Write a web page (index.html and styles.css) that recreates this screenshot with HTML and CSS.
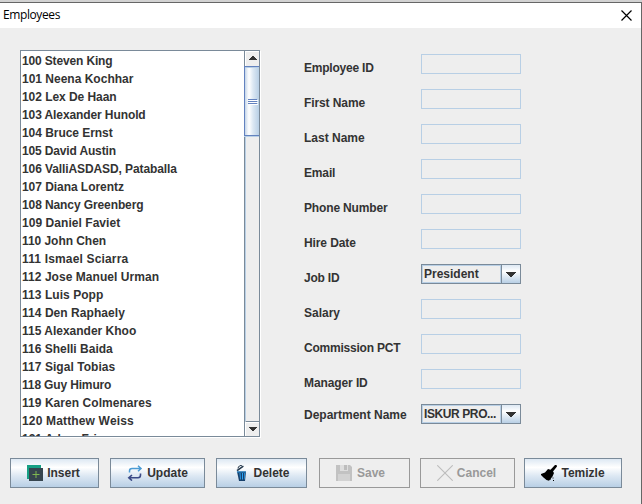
FILE: index.html
```
<!DOCTYPE html>
<html lang="en">
<head>
<meta charset="utf-8">
<title>Employees</title>
<link rel="stylesheet" href="styles.css">
</head>
<body>
<div class="window">
  <header class="titlebar">
    <span class="title">Employees</span>
    <svg class="close" width="11" height="11" viewBox="0 0 11 11"><path d="M.5 .5l10 10M10.500 .5l-10 10" stroke="#000" stroke-width="1.200"/></svg>
  </header>
  <main class="content">
    <section class="list-pane">
      <ul class="list">
        <li class="n3">100 Steven King</li><li>101 Neena Kochhar</li><li class="n1">102 Lex De Haan</li><li class="n2">103 Alexander Hunold</li><li class="n1">104 Bruce Ernst</li><li class="n3">105 David Austin</li><li class="n2">106 ValliASDASD, Pataballa</li><li class="n1">107 Diana Lorentz</li><li class="n2">108 Nancy Greenberg</li><li class="p1">109 Daniel Faviet</li><li class="n1">110 John Chen</li><li class="p3">111 Ismael Sciarra</li><li class="p1">112 Jose Manuel Urman</li><li class="p1">113 Luis Popp</li><li class="p1">114 Den Raphaely</li><li>115 Alexander Khoo</li><li>116 Shelli Baida</li><li class="p1">117 Sigal Tobias</li><li class="n3">118 Guy Himuro</li><li class="p1">119 Karen Colmenares</li><li class="p3">120 Matthew Weiss</li><li>121 Adam Fripp</li>
      </ul>
      <div class="scrollbar">
        <div class="arrow up"><svg width="8" height="4" viewBox="0 0 8 4" shape-rendering="crispEdges"><path d="M3 0h2v1h1v1h1v1h1v1H0V3h1V2h1V1h1z" fill="#333"/></svg></div>
        <div class="thumb"><i></i><i></i><i></i></div>
        <div class="track"></div>
        <div class="arrow down"><svg width="8" height="4" viewBox="0 0 8 4" shape-rendering="crispEdges"><path d="M0 0h8v1H7v1H6v1H5v1H3V3H2V2H1V1H0z" fill="#333"/></svg></div>
      </div>
    </section>
    <section class="form">
      <div class="row"><label class="n4">Employee ID</label><div class="field"></div></div>
      <div class="row"><label class="n2">First Name</label><div class="field"></div></div>
      <div class="row"><label>Last Name</label><div class="field"></div></div>
      <div class="row"><label class="n3">Email</label><div class="field"></div></div>
      <div class="row"><label class="n3">Phone Number</label><div class="field"></div></div>
      <div class="row"><label class="n2">Hire Date</label><div class="field"></div></div>
      <div class="row"><label class="n4">Job ID</label><div class="combo"><span>President</span><b><svg width="10" height="5" viewBox="0 0 10 5" shape-rendering="crispEdges"><path d="M0 0h10v1H9v1H8v1H7v1H6v1H4V4H3V3H2V2H1V1H0z" fill="#333"/></svg></b></div></div>
      <div class="row"><label>Salary</label><div class="field"></div></div>
      <div class="row"><label class="n4">Commission PCT</label><div class="field"></div></div>
      <div class="row"><label class="n2">Manager ID</label><div class="field"></div></div>
      <div class="row last"><label>Department Name</label><div class="combo"><span class="n5">ISKUR PRO...</span><b><svg width="10" height="5" viewBox="0 0 10 5" shape-rendering="crispEdges"><path d="M0 0h10v1H9v1H8v1H7v1H6v1H4V4H3V3H2V2H1V1H0z" fill="#333"/></svg></b></div></div>
    </section>
  </main>
  <footer class="buttons">
    <div class="btn insert"><svg width="16" height="16" viewBox="0 0 16 16"><path d="M0 0h14v14H0z" fill="#16a085"/><path d="M2 3h14v13H2z" fill="#36454f"/><path d="M9 6v7M5.500 9.500h7" stroke="#7fb850" stroke-width="1"/></svg><span>Insert</span></div>
    <div class="btn update"><svg width="16" height="16" viewBox="0 0 16 16" fill="none"><path d="M2.500 7.500V6Q2.500 3.500 5 3.500h8M11 .8l3 2.700-3 2.700" stroke="#4a9bd4" stroke-width="1.500"/><path d="M13.500 8.500V10q0 2.800-2.500 2.800H2.500M5 10l-3.200 2.800L5 15.600" stroke="#3b4a86" stroke-width="1.600"/></svg><span>Update</span></div>
    <div class="btn delete"><svg width="16" height="16" viewBox="0 0 16 16"><path d="M4 6.500h9L12 16H6z" fill="#17406b"/><path d="M6.500 8h1l.4 6.500h-.8zM9 8h1v6.500H9zM11.300 8h.8l-.6 6.500h-.6z" fill="#2aa3f5"/><path d="M3.800 6.500h9.200v1H4z" fill="#238bd6"/><path d="M3.500 5L10 .5l.8 1.300L4.500 6.200z" fill="#24394d"/><path d="M5 3.500L5.500 1.700 8 .3l1 .8" fill="none" stroke="#24394d"/></svg><span>Delete</span></div>
    <div class="btn save off"><svg width="16" height="16" viewBox="0 0 16 16"><path d="M0 0h14l2 2v14H0z" fill="#c2c2c2"/><path d="M4 0h8v6H4z" fill="#dedede"/><path d="M8 0h3v5H8z" fill="#bdbdbd"/><path d="M2 9h12v7H2z" fill="#d2d2d2"/></svg><span>Save</span></div>
    <div class="btn cancel off"><svg width="16" height="16" viewBox="0 0 16 16"><path d="M.3 .3l15.400 15.400M15.700 .3L.3 15.700" stroke="#bcbcbc" stroke-width="1.100"/></svg><span>Cancel</span></div>
    <div class="btn temizle"><svg width="16" height="16" viewBox="0 0 16 16"><path d="M14 0h1.500l.5 1.500L12 6.500 13 8l-1.500 3.500L8 15.800 5.500 15 2.500 12.500 0 10V9l4-1.500L7 4l2.500.8z"/><path d="M8.500 13.500h1.500v1H8.500zM11.500 12.500h1v1h-1zM12 15h1v1h-1z"/></svg><span>Temizle</span></div>
  </footer>
</div>
</body>
</html>
```
FILE: styles.css
```
* { box-sizing: border-box; }
body { margin: 0; background: #eee; font: bold 12px/18px "Liberation Sans", sans-serif; color: #333; }
.window { width: 642px; height: 504px; border-top: 2px solid #d2d2d2; overflow: hidden; display: flex; flex-direction: column; }
.titlebar { flex: none; height: 26px; border-top: 1px solid #666; border-right: 1px solid #666; background: #fff; display: flex; justify-content: space-between; padding: 3px 9px 0 3px; }
.title { font: 12px/18px "Open Sans", "Noto Sans", sans-serif; color: #000; letter-spacing: -.4px; }
.close { margin-top: 4px; }
.content { flex: none; height: 430px; padding: 22px 0 0 20px; border-right: 1px solid #666; display: flex; align-items: flex-start; }
.list-pane { width: 240px; height: 387px; border: 1px solid #7a8a99; box-shadow: 1px 1px #fff; background: #fff; display: flex; overflow: hidden; }
.list { list-style: none; margin: 0; padding: 1px 0 0 1px; width: 223px; height: 385px; overflow: hidden; white-space: nowrap; }
.list li { height: 18px; }
.n1 { letter-spacing: -.05px; }
.n2 { letter-spacing: -.1px; }
.n3 { letter-spacing: -.15px; }
.n4 { letter-spacing: -.22px; }
.n5 { letter-spacing: -.4px; }
.p1 { letter-spacing: .05px; }
.p3 { letter-spacing: .16px; }
.scrollbar { width: 15px; height: 385px; border-left: 1px solid #7a8a99; background: #eee; display: flex; flex-direction: column; }
.arrow { height: 15px; flex: none; border-top: 1px solid #fff; border-left: 1px solid #fff; display: flex; align-items: center; justify-content: center; }
.up { padding-bottom: 2px; }
.down { border-top: 1px solid #7a8a99; box-shadow: inset 0 1px #fff; }
.thumb { height: 70px; flex: none; margin-left: -1px; border: 1px solid #6382bf; border-right: 0; background: linear-gradient(90deg, #c3d4e8 0, #e6edf5 2px, #fff 4px, #dce8f3 8px, #b8cfe5); box-shadow: inset 0 1px #b8cfe5, 0 1px #b8cfe5; display: flex; flex-direction: column; align-items: center; justify-content: center; gap: 1px; }
.thumb i { width: 9px; height: 1px; background: #6382bf; box-shadow: 1px 1px #fff; }
.track { flex: 1; border-left: 1px solid #b8cfe5; }
.form { margin-left: 44px; padding-top: 4px; }
.row { height: 35px; display: flex; }
.row label { width: 117px; padding-top: 5px; white-space: nowrap; }
.row.last label { padding-top: 2px; }
.field { width: 100px; height: 20px; border: 1px solid #b8cfe5; }
.combo { width: 100px; height: 20px; border: 1px solid #7a8a99; display: flex; }
.combo span { width: 79px; border: 1px solid #b8cfe5; padding-left: 1px; line-height: 16px; white-space: nowrap; }
.combo b { width: 19px; border-left: 1px solid #7a8a99; background: linear-gradient(#dde8f3, #fff 35%, #b8cfe5); display: flex; align-items: center; justify-content: center; }
.buttons { flex: none; height: 46px; padding-left: 10px; border-right: 1px solid #666; display: flex; }
.btn { height: 30px; border: 1px solid #7a8a99; background: linear-gradient(#dde8f3, #fff 30%, #dde8f3 60%, #b8cfe5); display: flex; align-items: center; justify-content: center; gap: 4px; }
.off { background: none; border-color: #999; color: #999; }
.insert { width: 89px; margin-right: 11px; padding-right: 2px; }
.update { width: 95px; margin-right: 11px; }
.delete { width: 91px; margin-right: 12px; }
.save { width: 91px; margin-right: 10px; padding-right: 8px; gap: 5px; }
.cancel { width: 95px; margin-right: 9px; padding-right: 2px; }
.temizle { width: 98px; }
```
